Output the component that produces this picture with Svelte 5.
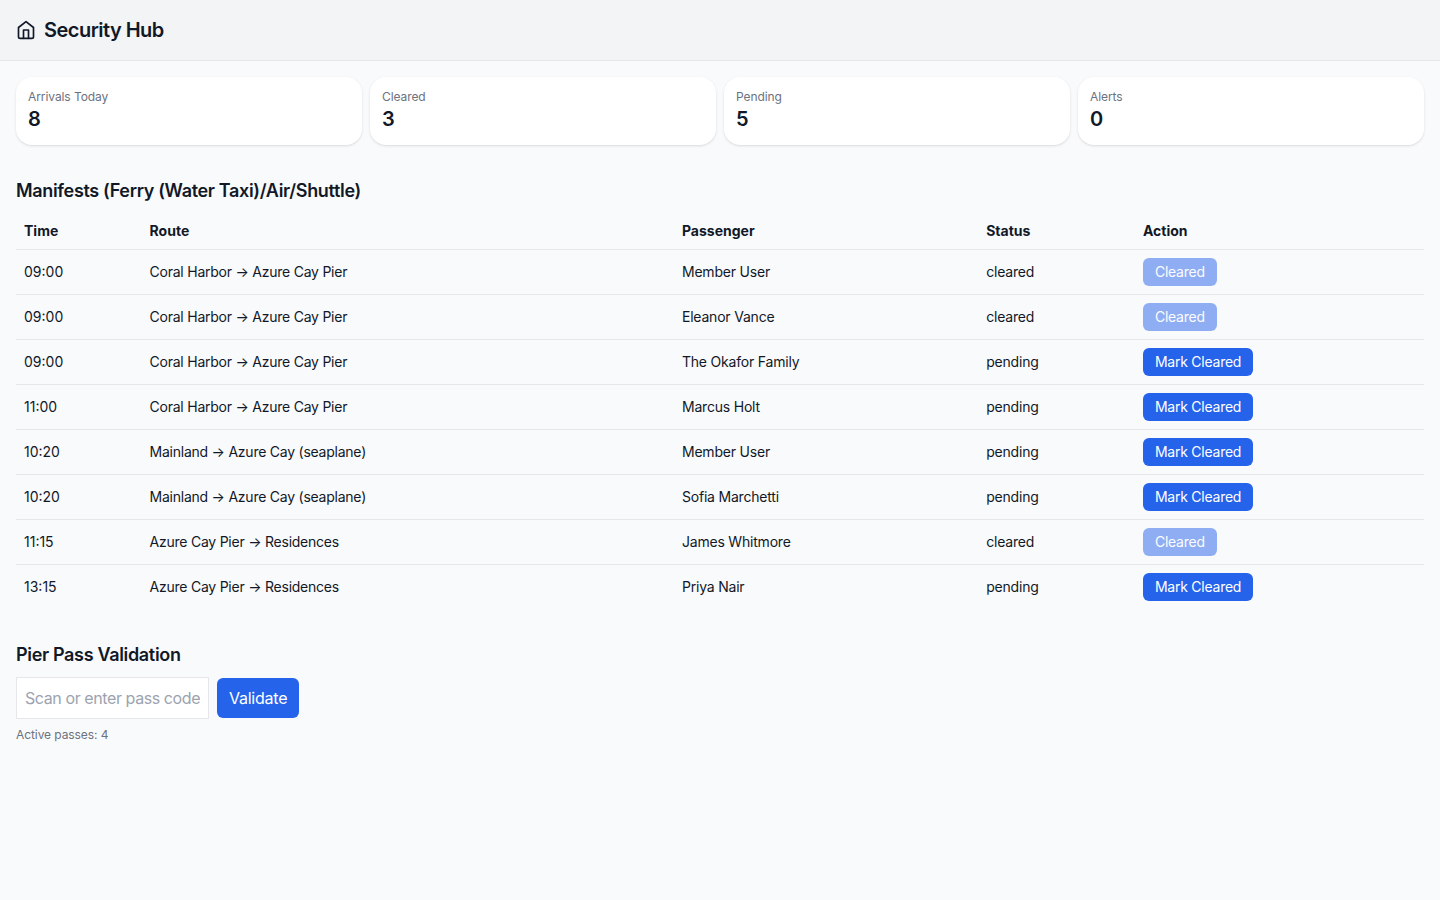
<script>
  let manifests = $state([
    { time: "09:00", route: "Coral Harbor → Azure Cay Pier", passenger: "Member User", status: "cleared" },
    { time: "09:00", route: "Coral Harbor → Azure Cay Pier", passenger: "Eleanor Vance", status: "cleared" },
    { time: "09:00", route: "Coral Harbor → Azure Cay Pier", passenger: "The Okafor Family", status: "pending" },
    { time: "11:00", route: "Coral Harbor → Azure Cay Pier", passenger: "Marcus Holt", status: "pending" },
    { time: "10:20", route: "Mainland → Azure Cay (seaplane)", passenger: "Member User", status: "pending" },
    { time: "10:20", route: "Mainland → Azure Cay (seaplane)", passenger: "Sofia Marchetti", status: "pending" },
    { time: "11:15", route: "Azure Cay Pier → Residences", passenger: "James Whitmore", status: "cleared" },
    { time: "13:15", route: "Azure Cay Pier → Residences", passenger: "Priya Nair", status: "pending" },
  ]);
  let code = $state("");

  let cleared = $derived(manifests.filter((m) => m.status === "cleared").length);
  let stats = $derived([
    { label: "Arrivals Today", value: manifests.length },
    { label: "Cleared", value: cleared },
    { label: "Pending", value: manifests.length - cleared },
    { label: "Alerts", value: 0 },
  ]);
</script>

<header>
  <svg
    width="20"
    height="20"
    viewBox="0 0 24 24"
    fill="none"
    stroke="currentColor"
    stroke-width="2"
    stroke-linecap="round"
    stroke-linejoin="round"
    aria-hidden="true"
  >
    <path d="m3 9 9-7 9 7v11a2 2 0 0 1-2 2H5a2 2 0 0 1-2-2z" />
    <path d="M9 22V12h6v10" />
  </svg>
  <h1>Security Hub</h1>
</header>

<main>
  <section class="stats">
    {#each stats as stat}
      <div class="card">
        <div class="label">{stat.label}</div>
        <div class="value">{stat.value}</div>
      </div>
    {/each}
  </section>

  <section>
    <h2>Manifests (Ferry (Water Taxi)/Air/Shuttle)</h2>
    <table>
      <thead>
        <tr>
          <th class="time">Time</th>
          <th class="route">Route</th>
          <th class="passenger">Passenger</th>
          <th class="status">Status</th>
          <th>Action</th>
        </tr>
      </thead>
      <tbody>
        {#each manifests as m}
          <tr>
            <td class="time">{m.time}</td>
            <td class="route">{m.route}</td>
            <td>{m.passenger}</td>
            <td>{m.status}</td>
            <td>
              <button
                class="mark"
                disabled={m.status === "cleared"}
                onclick={() => (m.status = "cleared")}
              >
                {m.status === "cleared" ? "Cleared" : "Mark Cleared"}
              </button>
            </td>
          </tr>
        {/each}
      </tbody>
    </table>
  </section>

  <section>
    <h2>Pier Pass Validation</h2>
    <div class="validate">
      <input bind:value={code} placeholder="Scan or enter pass code" />
      <button>Validate</button>
    </div>
    <div class="passes">Active passes: 4</div>
  </section>
</main>

<style>
  :global(body) {
    background: #f9fafc;
    color: #111827;
    font-family: Inter, sans-serif;
    font-size: 16px;
    line-height: 24px;
  }

  header {
    display: flex;
    align-items: center;
    gap: 8px;
    padding: 16px;
    background: #f3f4f6;
    border-bottom: 1px solid #e5e7eb;
  }

  h1,
  h2 {
    margin: 0;
    font-weight: 600;
    line-height: 28px;
  }

  h1 {
    font-size: 20px;
    letter-spacing: -0.52px;
  }

  h2 {
    margin-bottom: 8px;
    font-size: 18px;
    letter-spacing: -0.33px;
  }

  main {
    display: flex;
    flex-direction: column;
    gap: 32px;
    padding: 16px;
  }

  .stats {
    display: grid;
    grid-template-columns: repeat(4, 1fr);
    gap: 8px;
  }

  .card {
    padding: 12px;
    background: white;
    border-radius: 16px;
    box-shadow:
      0 1px 3px rgba(0, 0, 0, 0.1),
      0 1px 2px -1px rgba(0, 0, 0, 0.1);
  }

  .label,
  .passes {
    color: #6b7280;
    font-size: 12px;
    letter-spacing: -0.08px;
    line-height: 16px;
  }

  .value {
    font-size: 20px;
    font-weight: 600;
    line-height: 28px;
  }

  table {
    width: 100%;
    table-layout: fixed;
    border-collapse: collapse;
    font-size: 14px;
    line-height: 20px;
  }

  th,
  td {
    box-sizing: border-box;
    padding: 8px;
    text-align: left;
  }

  td {
    letter-spacing: -0.2px;
  }

  td.time {
    letter-spacing: 0;
  }

  td.route {
    letter-spacing: -0.24px;
  }

  th.time {
    width: 8.92%;
  }

  th.route {
    width: 37.81%;
  }

  th.passenger {
    width: 21.61%;
  }

  th.status {
    width: 11.13%;
  }

  tr {
    border-bottom: 1px solid #e5e7eb;
  }

  tbody tr:last-child {
    border-bottom: 0;
  }

  button {
    padding: 8px 12px;
    border: 0;
    border-radius: 6px;
    background: #2563eb;
    color: white;
    font: inherit;
    letter-spacing: -0.24px;
    cursor: pointer;
  }

  button:disabled {
    opacity: 0.5;
    cursor: default;
  }

  .mark {
    display: block;
    padding: 4px 12px;
  }

  .validate {
    display: flex;
    align-items: center;
    gap: 8px;
  }

  input {
    box-sizing: border-box;
    width: 193px;
    padding: 8px;
    border: 1px solid #e5e7eb;
    background: white;
    color: inherit;
    font: inherit;
    letter-spacing: -0.41px;
  }

  input::placeholder {
    color: #9ca3af;
  }

  .passes {
    margin-top: 8px;
  }
</style>
